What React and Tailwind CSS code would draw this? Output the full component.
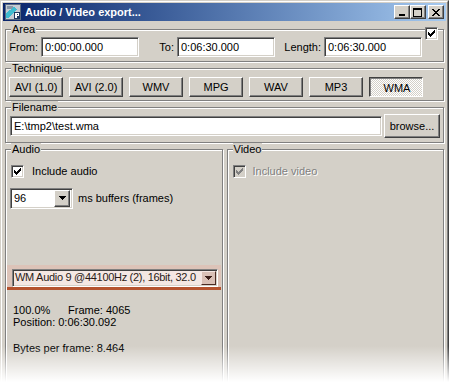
const sunken =
  'border border-t-[#808080] border-l-[#808080] border-r-white border-b-white shadow-[inset_1px_1px_0_#404040,inset_-1px_-1px_0_#d4d0c8]';
const raised =
  'border border-t-white border-l-white border-r-[#404040] border-b-[#404040] shadow-[inset_-1px_-1px_0_#808080]';

const techniques = ['AVI (1.0)', 'AVI (2.0)', 'WMV', 'MPG', 'WAV', 'MP3', 'WMA'];

function Group({ label, className = '', children }) {
  return (
    <fieldset
      className={`min-w-0 border border-[#808080] shadow-[inset_1px_1px_0_#fff,1px_1px_0_#fff] ${className}`}
    >
      <legend className="ml-[5px] bg-[#d4d0c8] px-[1px] text-[11px] leading-[13px]">{label}</legend>
      {children}
    </fieldset>
  );
}

function Check({ checked = true, disabled = false }) {
  return (
    <div
      className={`flex h-[13px] w-[13px] shrink-0 items-center justify-center ${sunken} ${
        disabled ? 'bg-[#d4d0c8]' : 'bg-white'
      }`}
    >
      {checked && (
        <svg width="7" height="7" viewBox="0 0 7 7" shapeRendering="crispEdges">
          <path
            d="M0 2h1v1h1v1h1v-1h1v-1h1v-1h1v-1h1v3h-1v1h-1v1h-1v1h-1v1h-1v-1h-1v-1h-1v-1h-1z"
            fill={disabled ? '#808080' : '#000'}
          />
        </svg>
      )}
    </div>
  );
}

function Arrow({ color = '#000' }) {
  return (
    <svg width="7" height="4" viewBox="0 0 7 4" shapeRendering="crispEdges">
      <path d="M0 0h7v1h-1v1h-1v1h-1v1h-1v-1h-1v-1h-1v-1h-1z" fill={color} />
    </svg>
  );
}

function Field({ value, className = '' }) {
  return (
    <div className={`flex h-[20px] items-center bg-white pl-[3px] ${sunken} ${className}`}>
      <span className="whitespace-nowrap">{value}</span>
    </div>
  );
}

function TitleButton({ kind, className = '' }) {
  return (
    <div className={`flex h-[14px] w-[16px] items-center justify-center bg-[#d4d0c8] ${raised} ${className}`}>
      <svg width="10" height="9" viewBox="0 0 10 9" shapeRendering="crispEdges">
        {kind === 'min' && <rect x="2" y="6" width="6" height="2" fill="#000" />}
        {kind === 'max' && (
          <path d="M0 0h9v9h-9zM1 2v6h7v-6z" fill="#000" fillRule="evenodd" />
        )}
        {kind === 'close' && (
          <path
            d="M1 1h2v1h1v1h2v-1h1v-1h2v1h-1v1h-1v1h-1v1h1v1h1v1h1v1h-2v-1h-1v-1h-2v1h-1v1h-2v-1h1v-1h1v-1h1v-1h-1v-1h-1v-1h-1z"
            fill="#000"
          />
        )}
      </svg>
    </div>
  );
}

function AppIcon() {
  return (
    <svg width="16" height="16" viewBox="0 0 16 16" shapeRendering="crispEdges">
      <rect x="0.5" y="0.5" width="15" height="15" fill="#c6ccd4" stroke="#5a6a80" />
      <rect x="2" y="2" width="6" height="3" fill="#8898a8" />
      <path d="M1 14 L1 9 L9 3 L12 5 L4 14 Z" fill="#3fbcd0" />
      <rect x="9" y="8" width="6" height="7" fill="#203a60" />
      <rect x="10" y="9" width="2" height="5" fill="#fff" />
      <rect x="12" y="9" width="2" height="3" fill="#fff" />
      <rect x="12" y="10" width="1" height="1" fill="#203a60" />
    </svg>
  );
}

export default function App() {
  return (
    <div className="relative h-[391px] w-[450px] overflow-hidden bg-white font-['Liberation_Sans',Arial,sans-serif] text-[11px] text-black">
      <div className="flex h-[391px] w-[449px] flex-col border border-t-[#d4d0c8] border-l-[#d4d0c8] border-r-[#404040] border-b-[#404040] bg-[#d4d0c8]">
        <div className="flex flex-1 flex-col border border-t-white border-l-white border-r-[#808080] border-b-[#808080] p-px">
          {/* title bar */}
          <div className="flex h-[18px] shrink-0 items-center bg-linear-to-r from-[#0a246a] to-[#a6caf0] px-[2px]">
            <AppIcon />
            <span className="ml-[4px] text-[11px] font-bold text-white">Audio / Video export...</span>
            <div className="ml-auto flex">
              <TitleButton kind="min" />
              <TitleButton kind="max" />
              <TitleButton kind="close" className="ml-[2px]" />
            </div>
          </div>

          <div className="mx-[2px] mt-[2px] flex flex-1 flex-col">
            {/* Area */}
            <div className="relative">
              <Group label="Area" className="h-[39px]">
                <div className="mt-[1px] flex items-center">
                  <div className="flex w-[133px] items-center justify-end">
                    <span>From:</span>
                    <Field value="0:00:00.000" className="ml-[3px] w-[98px]" />
                  </div>
                  <div className="flex w-[136px] items-center justify-end">
                    <span>To:</span>
                    <Field value="0:06:30.000" className="ml-[3px] w-[98px]" />
                  </div>
                  <div className="flex w-[147px] items-center justify-end">
                    <span>Length:</span>
                    <Field value="0:06:30.000" className="ml-[3px] w-[98px]" />
                  </div>
                </div>
              </Group>
              <div className="absolute right-[6px] top-[4px]">
                <Check />
              </div>
            </div>

            {/* Technique */}
            <Group label="Technique" className="h-[39px]">
              <div className="ml-[3px] mt-[2px] flex gap-[6px]">
                {techniques.map((t) =>
                  t === 'WMA' ? (
                    <div
                      key={t}
                      className="flex h-[20px] w-[54px] items-center justify-center border border-t-[#404040] border-l-[#404040] border-r-white border-b-white bg-[repeating-conic-gradient(#ffffff_0%_25%,#d4d0c8_0%_50%)] bg-[length:2px_2px] pl-[2px] pt-[2px] shadow-[inset_1px_1px_0_#808080]"
                    >
                      {t}
                    </div>
                  ) : (
                    <div
                      key={t}
                      className={`flex h-[20px] w-[54px] items-center justify-center bg-[#d4d0c8] ${raised}`}
                    >
                      {t}
                    </div>
                  )
                )}
              </div>
            </Group>

            {/* Filename */}
            <Group label="Filename" className="h-[42px]">
              <div className="flex items-center gap-[2px] pl-[4px] pr-[3px]">
                <Field value="E:\tmp2\test.wma" className="flex-1" />
                <div className={`flex h-[24px] w-[56px] items-center justify-center bg-[#d4d0c8] ${raised}`}>
                  browse...
                </div>
              </div>
            </Group>

            {/* Audio / Video */}
            <div className="flex gap-[4px]">
              <Group label="Audio" className="h-[260px] flex-1">
                <div className="ml-[5px] mt-[7px] flex items-center">
                  <Check />
                  <span className="ml-[8px]">Include audio</span>
                </div>
                <div className="ml-[4px] mt-[8px] flex items-center">
                  <div className={`flex h-[21px] w-[63px] items-center bg-white pl-[3px] pr-[2px] ${sunken}`}>
                    <span className="flex-1">96</span>
                    <div className={`flex h-[17px] w-[16px] items-center justify-center bg-[#d4d0c8] ${raised}`}>
                      <Arrow />
                    </div>
                  </div>
                  <span className="ml-[5px]">ms buffers (frames)</span>
                </div>

                <div className="mx-[1px] mt-[56px] border-b-[3px] border-[#b5532f] bg-[#dcc3b8] pl-[5px] pr-[3px] pt-[4px]">
                  <div className={`flex h-[18px] items-center bg-[#f4e7e3] pl-[2px] pr-[1px] ${sunken}`}>
                    <span className="flex-1 whitespace-nowrap tracking-[-0.3px] text-[#2a1a16]">
                      WM Audio 9 @44100Hz (2), 16bit, 32.0
                    </span>
                    <div className="flex h-[14px] w-[15px] shrink-0 items-center justify-center border border-t-[#f4e7e3] border-l-[#f4e7e3] border-r-[#4a2a22] border-b-[#4a2a22] bg-[#d9c0b6]">
                      <Arrow color="#3a1e18" />
                    </div>
                  </div>
                </div>

                <div className="ml-[7px] mt-[14px] leading-[12px]">
                  <div>
                    <span className="inline-block w-[55px]">100.0%</span>
                    <span>Frame: 4065</span>
                  </div>
                  <div>Position: 0:06:30.092</div>
                  <div className="mt-[14px]">Bytes per frame: 8.464</div>
                </div>
              </Group>

              <Group label="Video" className="h-[260px] flex-1">
                <div className="ml-[5px] mt-[7px] flex items-center">
                  <Check disabled />
                  <span className="ml-[7px] text-[#808080] [text-shadow:1px_1px_0_#fff]">Include video</span>
                </div>
              </Group>
            </div>
          </div>
        </div>
      </div>

      <div className="pointer-events-none absolute inset-x-0 bottom-0 top-[346px] bg-linear-to-b from-white/0 to-white to-80%" />
    </div>
  );
}
